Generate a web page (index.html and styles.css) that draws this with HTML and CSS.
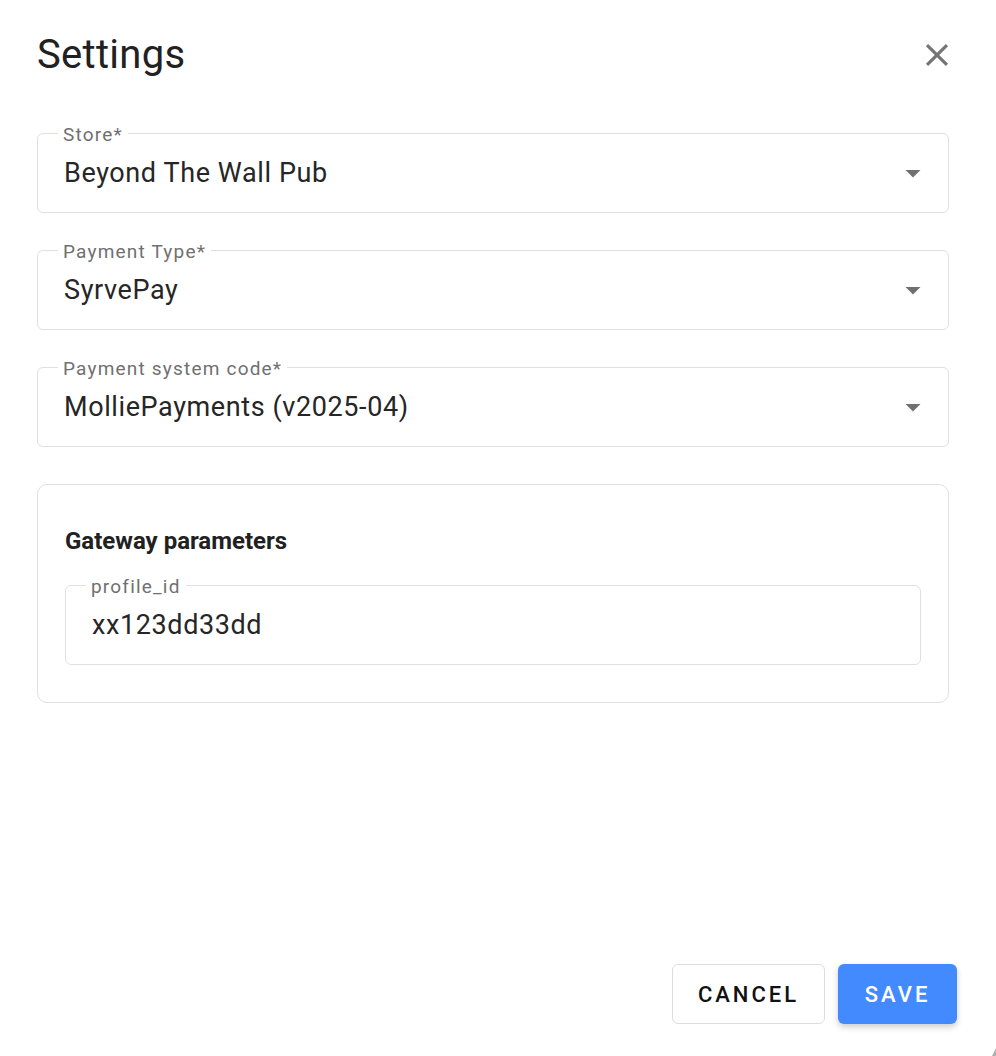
FILE: index.html
```html
<!DOCTYPE html>
<html lang="en">
<head>
    <meta charset="UTF-8">
    <meta name="viewport" content="width=device-width, initial-scale=1.0">
    <title>Settings</title>
    <link rel="stylesheet" href="styles.css">
</head>
<body>
    <div class="dialog">
        <div class="dialog-header">
            <h1>Settings</h1>
            <button class="close-btn" aria-label="Close">
                <svg viewBox="0 0 24 24" width="38" height="38"><path d="M19 6.41L17.59 5 12 10.59 6.41 5 5 6.41 10.59 12 5 17.59 6.41 19 12 13.41 17.59 19 19 17.59 13.41 12z"/></svg>
            </button>
        </div>

        <div class="dialog-body">
            <div class="field select">
                <span class="field-label">Store*</span>
                <span class="field-value">Beyond The Wall Pub</span>
                <svg class="arrow" viewBox="0 0 24 24" width="36" height="36"><path d="M7 10l5 5 5-5z"/></svg>
            </div>
            <div class="field select">
                <span class="field-label">Payment Type*</span>
                <span class="field-value">SyrvePay</span>
                <svg class="arrow" viewBox="0 0 24 24" width="36" height="36"><path d="M7 10l5 5 5-5z"/></svg>
            </div>
            <div class="field select">
                <span class="field-label">Payment system code*</span>
                <span class="field-value">MolliePayments (v2025-04)</span>
                <svg class="arrow" viewBox="0 0 24 24" width="36" height="36"><path d="M7 10l5 5 5-5z"/></svg>
            </div>

            <div class="params">
                <h2>Gateway parameters</h2>
                <div class="field">
                    <span class="field-label">profile_id</span>
                    <span class="field-value">xx123dd33dd</span>
                </div>
            </div>
        </div>

        <div class="dialog-footer">
            <button class="btn btn-cancel">Cancel</button>
            <button class="btn btn-save">Save</button>
        </div>
        <span class="grip"></span>
    </div>
</body>
</html>
```

FILE: styles.css
```css
* {
    box-sizing: border-box;
}
body {
    font-family: Roboto, 'Liberation Sans', sans-serif;
    background: #ffffff;
    margin: 0;
    color: #212121;
}
.dialog {
    position: relative;
    height: 1056px;
    padding: 36px 39px 32px 37px;
    display: flex;
    flex-direction: column;
}
.dialog-header {
    display: flex;
    justify-content: space-between;
    align-items: center;
    height: 38px;
}
h1 {
    margin: 0;
    font-size: 40px;
    line-height: 38px;
    font-weight: 400;
    letter-spacing: 0.3px;
    color: #212121;
}
.close-btn {
    background: none;
    border: none;
    padding: 0;
    margin-right: 1px;
    width: 38px;
    height: 38px;
    cursor: pointer;
    fill: #757575;
}
.close-btn svg {
    display: block;
}
.dialog-body {
    margin: 59px 8px 0 0;
    display: flex;
    flex-direction: column;
    gap: 37px;
}
.field {
    position: relative;
    height: 80px;
    border: 1px solid #e0e0e0;
    border-radius: 6px;
    display: flex;
    align-items: center;
    padding: 0 17px 0 26px;
}
/* label sits over the top border */
.field-label {
    position: absolute;
    top: -10px;
    left: 20px;
    padding: 0 5px;
    background: #ffffff;
    font-size: 19px;
    line-height: 22px;
    letter-spacing: 1.2px;
    color: #707070;
}
.field-value {
    flex: 1;
    font-size: 27px;
    letter-spacing: 0.6px;
    color: #262626;
}
.arrow {
    fill: #707070;
    flex-shrink: 0;
}
.params {
    border: 1px solid #e0e0e0;
    border-radius: 10px;
    padding: 41px 27px 37px 27px;
}
.params h2 {
    margin: 0 0 29px;
    font-size: 24px;
    line-height: 30px;
    font-weight: 700;
    color: #212121;
}
.dialog-footer {
    margin-top: auto;
    display: flex;
    justify-content: flex-end;
    gap: 13px;
}
.btn {
    height: 60px;
    border-radius: 6px;
    font-family: Roboto, 'Liberation Sans', sans-serif;
    font-size: 22px;
    font-weight: 500;
    letter-spacing: 3px;
    text-transform: uppercase;
    cursor: pointer;
}
.btn-cancel {
    width: 153px;
    background: #ffffff;
    border: 1px solid #dddddd;
    color: #111111;
}
.btn-save {
    width: 119px;
    background: #448aff;
    border: none;
    color: #ffffff;
    box-shadow: 0 3px 6px rgba(0, 0, 0, 0.2);
}
.grip {
    position: absolute;
    right: 0;
    bottom: 0;
    width: 0;
    height: 0;
    border-left: 4px solid transparent;
    border-bottom: 8px solid #b0b0b0;
}
```
